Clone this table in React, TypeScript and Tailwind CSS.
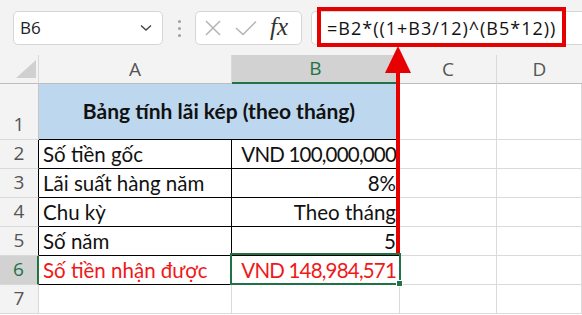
import React from "react";

const HDR = "'Open Sans', 'Noto Sans', sans-serif";
const CELL = "Lato, 'Noto Sans', sans-serif";

function ColHeader({ label, selected, last }: { label: string; selected?: boolean; last?: boolean }) {
  return (
    <div
      className={
        "flex items-center justify-center text-[19px] border-b " +
        (last ? "" : "border-r ") +
        (selected
          ? "bg-[#d2d2d2] text-[#217346] border-b-2 border-b-[#217346] border-r-[#bcbcbc]"
          : "bg-[#f3f3f3] text-[#555] border-b-[#bcbcbc] border-r-[#d9d9d9]")
      }
      style={{ fontFamily: HDR }}
    >
      {label}
    </div>
  );
}

function RowHeader({ n, borderClass, selected }: { n: number; borderClass: string; selected?: boolean }) {
  return (
    <div
      className={
        "flex items-end justify-center text-[19px] leading-none border-r border-b border-b-[#d9d9d9] pb-[5px] " +
        borderClass +
        (selected ? " bg-[#d2d2d2] text-[#217346] border-r-2" : " bg-[#f3f3f3] text-[#555]")
      }
      style={{ fontFamily: HDR }}
    >
      {n}
    </div>
  );
}

function Cell({
  children,
  right,
  red,
  border,
  tight,
}: {
  children?: React.ReactNode;
  right?: boolean;
  red?: boolean;
  border?: string;
  tight?: boolean;
}) {
  return (
    <div
      className={
        "flex items-end pb-[4px] text-[20.5px] leading-none whitespace-nowrap overflow-hidden border-r border-b " +
        (right ? "justify-end pr-[3px] " : "pl-[4px] ") +
        (red ? "text-[#f01818] " : "text-[#111] ") +
        (tight ? "tracking-[-0.8px] " : "") +
        (border ?? "border-[#dadada]")
      }
      style={{ fontFamily: CELL }}
    >
      {children}
    </div>
  );
}

export default function App() {
  const black = "border-black";
  return (
    <div className="relative w-[582px] h-[315px] overflow-hidden bg-white">
      {/* Toolbar */}
      <div className="flex items-center h-[55px] bg-[#f3f3f3] pb-[10px]">
        <div className="flex items-end h-[45px] w-full">
          <div className="ml-[13px] w-[150px] h-[34px] bg-white border border-[#d6d6d6] rounded-[5px] flex items-center justify-between pl-[6px] pr-[10px]">
            <span className="text-[17px] text-[#222]" style={{ fontFamily: HDR }}>B6</span>
            <svg width="12" height="8" viewBox="0 0 12 8">
              <path d="M1 1.5 L6 6 L11 1.5" fill="none" stroke="#444" strokeWidth="1.4" />
            </svg>
          </div>
          <div className="w-[32px] h-[34px] flex flex-col items-center justify-center gap-[4px]">
            <div className="w-[3px] h-[3px] rounded-full bg-[#a0a0a0]" />
            <div className="w-[3px] h-[3px] rounded-full bg-[#a0a0a0]" />
            <div className="w-[3px] h-[3px] rounded-full bg-[#a0a0a0]" />
          </div>
          <div className="w-[107px] h-[34px] bg-white border border-[#d6d6d6] rounded-[5px] flex items-center pl-[8px] gap-[13px]">
            <svg width="18" height="18" viewBox="0 0 18 18">
              <path d="M2 2 L16 16 M16 2 L2 16" stroke="#b4b4b4" strokeWidth="1.5" />
            </svg>
            <svg width="22" height="16" viewBox="0 0 22 16">
              <path d="M1 8 L8 14.5 L21 1.5" fill="none" stroke="#b4b4b4" strokeWidth="1.5" />
            </svg>
            <span
              className="text-[25px] italic text-[#333] leading-none -mt-[3px]"
              style={{ fontFamily: "'Liberation Serif', 'DejaVu Serif', serif" }}
            >
              fx
            </span>
          </div>
          <div className="ml-[9px] flex-1 h-[34px] bg-white border border-[#d6d6d6] border-r-0 rounded-l-[5px] flex items-center pl-[15px]">
            <span className="text-[18px] text-[#111] tracking-[1px]" style={{ fontFamily: HDR }}>
              =B2*((1+B3/12)^(B5*12))
            </span>
          </div>
        </div>
      </div>

      {/* Grid */}
      <div
        className="grid"
        style={{
          gridTemplateColumns: "39px 193px 168px 97px 1fr",
          gridTemplateRows: "29px 56px 29px 29px 29px 29px 29px 29px",
        }}
      >
        <div className="relative bg-[#f3f3f3] border-r border-b border-r-[#d9d9d9] border-b-[#bcbcbc]">
          <svg className="absolute left-[16px] top-[5px]" width="20" height="18" viewBox="0 0 20 18">
            <path d="M20 0 L20 18 L0 18 Z" fill="#d0d0d0" />
          </svg>
        </div>
        <ColHeader label="A" />
        <ColHeader label="B" selected />
        <ColHeader label="C" />
        <ColHeader label="D" last />

        <RowHeader n={1} borderClass="border-r-[#c6c6c6]" />
        <div
          className="col-span-2 flex items-center justify-center bg-[#bdd7ee] border-r border-b border-r-[#c6c6c6] border-b-black pb-[2px] text-[21px] font-bold text-[#111]"
          style={{ fontFamily: CELL }}
        >
          Bảng tính lãi kép (theo tháng)
        </div>
        <Cell />
        <Cell />

        <RowHeader n={2} borderClass="border-r-black" />
        <Cell border={black}>Số tiền gốc</Cell>
        <Cell right tight border={black}>VND 100,000,000</Cell>
        <Cell />
        <Cell />

        <RowHeader n={3} borderClass="border-r-black" />
        <Cell border={black}>Lãi suất hàng năm</Cell>
        <Cell right border={black}>8%</Cell>
        <Cell />
        <Cell />

        <RowHeader n={4} borderClass="border-r-black" />
        <Cell border={black}>Chu kỳ</Cell>
        <Cell right border={black}>Theo tháng</Cell>
        <Cell />
        <Cell />

        <RowHeader n={5} borderClass="border-r-black" />
        <Cell border={black}>Số năm</Cell>
        <Cell right border={black}>5</Cell>
        <Cell />
        <Cell />

        <RowHeader n={6} borderClass="border-r-[#217346]" selected />
        <Cell red border={black}>Số tiền nhận được</Cell>
        <Cell red right tight border={black}>VND 148,984,571</Cell>
        <Cell />
        <Cell />

        <RowHeader n={7} borderClass="border-r-[#d9d9d9]" />
        <Cell />
        <Cell />
        <Cell />
        <Cell />
      </div>

      {/* Selection B6 */}
      <div className="absolute left-[230px] top-[253px] w-[171px] h-[32px] border-2 border-[#217346] pointer-events-none" />
      <div className="absolute left-[396px] top-[280px] w-[7px] h-[7px] bg-[#217346] border border-white" />

      {/* Red highlight box around formula */}
      <div className="absolute left-[317px] top-[7px] w-[249px] h-[40px] border-[4px] border-[#e60000]" />

      {/* Arrow */}
      <svg className="absolute left-0 top-0 pointer-events-none" width="582" height="315">
        <rect x="396" y="70" width="4" height="183" fill="#e60000" />
        <path d="M398 46 L411 73 L385 73 Z" fill="#e60000" />
      </svg>
    </div>
  );
}
